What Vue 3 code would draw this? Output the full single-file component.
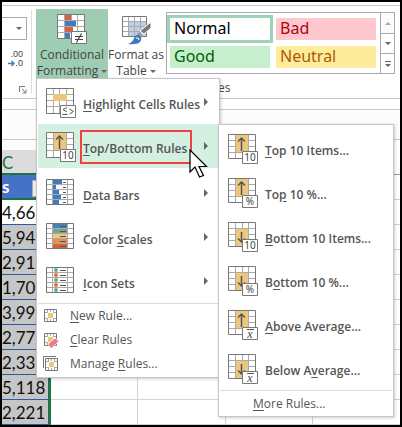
<script setup>
const numbers = ['4,66', '5,94', '2,91', '1,70', '3,99', '2,77', '2,33', '5,118', '2,221']
const gallery = [
  { name: 'Normal', cls: 'normal' },
  { name: 'Bad', cls: 'bad' },
  { name: 'Good', cls: 'good' },
  { name: 'Neutral', cls: 'neutral' }
]
// Each label is split into [before, access key, after].
const rules = [
  { label: ['', 'H', 'ighlight Cells Rules'], icon: 'highlight' },
  { label: ['', 'T', 'op/Bottom Rules'], icon: 'top', active: true },
  { label: ['', 'D', 'ata Bars'], icon: 'bars' },
  { label: ['Color ', 'S', 'cales'], icon: 'scales' },
  { label: ['', 'I', 'con Sets'], icon: 'icons' }
]
const actions = [
  { label: ['', 'N', 'ew Rule...'], icon: 'new' },
  { label: ['', 'C', 'lear Rules'], icon: 'clear' },
  { label: ['Manage ', 'R', 'ules...'], icon: 'manage' }
]
const tops = [
  { label: ['', 'T', 'op 10 Items...'], badge: '10', dir: 'up' },
  { label: ['To', 'p', ' 10 %...'], badge: '%', dir: 'up' },
  { label: ['', 'B', 'ottom 10 Items...'], badge: '10', dir: 'down' },
  { label: ['B', 'o', 'ttom 10 %...'], badge: '%', dir: 'down' },
  { label: ['', 'A', 'bove Average...'], badge: 'x', dir: 'up' },
  { label: ['Below A', 'v', 'erage...'], badge: 'x', dir: 'down' }
]
const scaleColors = ['#4a7ebb', '#6fa795', '#edc77c', '#ec8f45', '#d9603b']
const dotColors = ['#6fa795', '#e8702a', '#6fa795', '#e8702a', '#6fa795']
const barWidths = [9, 3, 6, 8, 6]
</script>

<template>
  <main class="window">
    <header class="ribbon">
      <section class="number-group">
        <button class="format-box" aria-label="Number format"><i class="caret"></i></button>
        <button class="decimals" aria-label="Decrease decimal">
          <span>.00</span>
          <span class="dec-row"><svg width="7" height="7" viewBox="0 0 7 7"><path d="M0 3.5H6M3.5 1L6 3.5L3.5 6" fill="none" stroke="#3f7cbf" stroke-width="1.5" /></svg>.0</span>
        </button>
        <svg class="launcher" width="8" height="8" viewBox="0 0 8 8"><path d="M.5 6V.5H6M3 3L6.500 6.500M7 3.500V7H3.500" fill="none" stroke="#777" /></svg>
      </section>
      <section class="styles-group">
        <button class="big pressed">
          <svg width="30" height="31" viewBox="0 0 30 31">
            <path d="M.5.500H27.500V24.500H.5Z" fill="#fff" />
            <path d="M8 1H14V6H8ZM8 13H16V18H8Z" fill="#d9603b" />
            <path d="M8 7H19V12H8ZM8 19H13V24H8Z" fill="#3f7cbf" />
            <path d="M7.500 1V24M14.500 1V6M20.500 1V24M1 6.500H27M1 12.500H27M1 18.500H27" fill="none" stroke="#aaa" />
            <path d="M.5.500H27.500V24.500H.5Z" fill="none" stroke="#777" />
            <path d="M14.500 17.500H29.500V29.500H14.500Z" fill="#fff" stroke="#777" />
            <path d="M18 22.500H26M18 25.500H26M24.500 19.500L19.500 28.500" fill="none" stroke="#444" stroke-width="1.2" />
          </svg>
          <span>Conditional</span>
          <span class="drop">Formatting <i class="caret"></i></span>
        </button>
        <button class="big format-table">
          <svg width="30" height="31" viewBox="0 0 30 31">
            <path d="M1.500 2.500H25.500V22.500H1.500Z" fill="#fff" />
            <path d="M8 8H25V22H8Z" fill="#bdd0e9" />
            <path d="M7.500 3V22M13.500 3V22M19.500 3V22M2 7.500H25M2 12.500H25M2 17.500H25" fill="none" stroke="#aaa" />
            <path d="M1.500 2.500H25.500V22.500H1.500Z" fill="none" stroke="#777" />
            <path d="M30 8L30 14L23 20L19 17Z" fill="#777" stroke="#fff" />
            <path d="M18 18L22 22L20 24L16 20Z" fill="#999" />
            <path d="M7 30Q12 28 13 24Q15 20 18 21Q22 24 19 28Q16 31 7 30Z" fill="#3f7cbf" />
            <path d="M15 24Q18 23 18 26" fill="none" stroke="#fff" />
          </svg>
          <span>Format as</span>
          <span class="drop">Table <i class="caret"></i></span>
        </button>
        <div class="gallery">
          <div class="swatches">
            <button v-for="g in gallery" :key="g.name" class="swatch" :class="g.cls">{{ g.name }}</button>
          </div>
          <div class="scroller">
            <button class="dim" aria-label="Previous styles"><i class="caret up"></i></button>
            <button aria-label="Next styles"><i class="caret"></i></button>
            <button aria-label="More styles"><i class="more-line"></i><i class="caret"></i></button>
          </div>
        </div>
      </section>
      <span class="group-name">Styles</span>
    </header>
    <div class="formula-bar"></div>
    <div class="sheet-gap"></div>
    <table class="sheet">
      <thead>
        <tr class="letters"><th>C</th><th></th><th></th><th></th><th></th></tr>
      </thead>
      <tbody>
        <tr class="titles"><th><div class="title-cell"><span>s</span><i class="filter"></i></div></th><td></td><td></td><td></td><td></td></tr>
        <tr v-for="n in numbers" :key="n"><td class="num">{{ n }}</td><td></td><td></td><td></td><td></td></tr>
      </tbody>
    </table>

    <nav class="menu main-menu" aria-label="Conditional Formatting">
      <button v-for="r in rules" :key="r.icon" class="item" :class="{ active: r.active }">
        <svg class="pic" width="30" height="31" viewBox="0 0 30 31">
          <path d="M.5.500H27.500V25.500H.5Z" fill="#fff" />
          <g v-if="r.icon === 'highlight'">
            <path d="M7.500 1V25M13.500 1V25M20.500 1V25M1 6.500H27M1 12.500H27M1 18.500H27" fill="none" stroke="#aaa" />
            <path d="M7 6H21V13H7Z" fill="#edc77c" />
          </g>
          <g v-else-if="r.icon === 'top'">
            <path d="M7.500 1V25M20.500 1V25M1 6.500H27M1 12.500H27M1 18.500H27" fill="none" stroke="#aaa" />
            <path d="M8 1H20V18H8Z" fill="#edc77c" />
            <path d="M13.500 17V4M10 7.500L13.500 4L17 7.500" fill="none" stroke="#555" stroke-width="1.500" />
          </g>
          <g v-else>
            <path d="M6.500 1V25M21.500 1V25M1 5.500H27M1 10.500H27M1 15.500H27M1 20.500H27" fill="none" stroke="#aaa" />
            <template v-for="n in 5" :key="n">
              <rect v-if="r.icon === 'bars'" x="7" :y="n * 5 - 4" :width="barWidths[n - 1]" height="4" fill="#3f7cbf" />
              <rect v-if="r.icon === 'scales'" x="7" :y="n * 5 - 4" width="14" height="4" :fill="scaleColors[n - 1]" />
              <rect v-if="r.icon === 'icons'" x="8" :y="n * 5 - 4" width="4" height="4" rx="2" :fill="dotColors[n - 1]" />
              <path :d="`M${r.icon === 'bars' ? 17 : 14} ${n * 5 - 1.5}H20`" stroke="#555" />
            </template>
          </g>
          <path d="M.5.500H27.500V25.500H.5Z" fill="none" stroke="#777" />
          <g v-if="r.icon === 'highlight' || r.icon === 'top'">
            <path d="M14.500 17.500H29.500V29.500H14.500Z" fill="#fff" stroke="#777" />
            <text v-if="r.icon === 'top'" class="badge" x="22" y="27" text-anchor="middle">10</text>
            <path v-else d="M21 19.500L17 21.500L21 24M16.500 26.500H21.500M23.500 21L27.500 23.500L23.500 26" fill="none" stroke="#555" />
          </g>
        </svg>
        <span class="text">{{ r.label[0] }}<u>{{ r.label[1] }}</u>{{ r.label[2] }}</span>
        <i class="arrow"></i>
      </button>
      <hr />
      <button v-for="a in actions" :key="a.icon" class="action">
        <svg width="16" height="16" viewBox="0 0 16 16">
          <path v-if="a.icon === 'manage'" d="M.5 12V.500H13" fill="none" stroke="#777" />
          <g :class="{ shifted: a.icon === 'manage' }">
            <path d="M1.500 1.500H13.500V13.500H1.500Z" fill="#fff" stroke="#777" />
            <path d="M4.500 2V5M10.500 2V5M4.500 10V13M10.500 10V13M2 4.500H5M10 4.500H13M2 10.500H5M10 10.500H13M7.500 2V4M7.500 11V13" stroke="#aaa" />
            <path d="M5 5H10V10H5Z" fill="#edc77c" />
          </g>
          <path v-if="a.icon === 'clear'" d="M5 12L12 6L16 9L9 16H7Z" fill="#e87f90" stroke="#fff" stroke-width=".7" />
        </svg>
        <span>{{ a.label[0] }}<u>{{ a.label[1] }}</u>{{ a.label[2] }}</span>
      </button>
    </nav>

    <nav class="menu sub-menu" aria-label="Top/Bottom Rules">
      <button v-for="t in tops" :key="t.label.join('')" class="item">
        <svg class="pic" width="30" height="31" viewBox="0 0 30 31">
          <path d="M.5.500H27.500V24.500H.5Z" fill="#fff" />
          <path d="M7.500 1V24M14.500 1V24M20.500 1V24M1 6.500H27M1 12.500H27M1 18.500H27" fill="none" stroke="#aaa" />
          <path :d="t.dir === 'up' ? 'M8 1H20V18H8Z' : 'M8 7H20V24H8Z'" fill="#edc77c" />
          <path v-if="t.dir === 'up'" d="M13.500 17V4M10 7.500L13.500 4L17 7.500" fill="none" stroke="#555" stroke-width="1.500" />
          <path v-else d="M13.500 10V20M10 16.500L13.500 20L17 16.500" fill="none" stroke="#555" stroke-width="1.500" />
          <path d="M.5.500H27.500V24.500H.5Z" fill="none" stroke="#777" />
          <path d="M14.500 17.500H29.500V29.500H14.500Z" fill="#fff" stroke="#777" />
          <text v-if="t.badge !== 'x'" class="badge" x="22" y="27" text-anchor="middle">{{ t.badge }}</text>
          <g v-else>
            <text class="badge mean" x="22" y="28" text-anchor="middle">x</text>
            <path d="M19 19.500H26" stroke="#555" />
          </g>
        </svg>
        <span class="text">{{ t.label[0] }}<u>{{ t.label[1] }}</u>{{ t.label[2] }}</span>
      </button>
      <hr />
      <button class="action more"><span><u>M</u>ore Rules...</span></button>
    </nav>

    <div class="callout"></div>
    <svg class="pointer" width="19" height="30" viewBox="0 0 19 30">
      <path d="M1 1V23L6 18L10.500 28L14.500 26.500L10 17.500H17.500Z" fill="#fff" stroke="#000" stroke-width="1.200" />
    </svg>
  </main>
</template>

<style>
body { margin: 0; }
</style>

<style scoped>
* { box-sizing: border-box; }
.window {
  position: relative;
  border: 2px solid #000;
  background: #fff;
  overflow: hidden;
  font-family: "Open Sans", "Noto Sans", sans-serif;
  font-size: 12px;
  line-height: 16px;
  color: #444;
}
button {
  margin: 0;
  padding: 0;
  border: 0;
  background: none;
  font: inherit;
  color: inherit;
}
.caret {
  display: inline-block;
  border: 3px solid transparent;
  border-top-color: #666;
  border-bottom: 0;
  vertical-align: 3px;
}
.caret.up { border-bottom: 3px solid #aaa; border-top: 0; }
.ribbon {
  display: grid;
  grid-template-columns: 30px 1fr;
  margin-top: 3px;
  height: 94px;
  border-top: 1px solid #c8c8c8;
  border-bottom: 1px solid #c8c8c8;
}
.number-group {
  grid-row: 1 / 3;
  display: flex;
  flex-direction: column;
  align-items: flex-end;
  margin: 4px 0 4px;
  padding: 7px 4px 0 0;
  border-right: 1px solid #dcdcdc;
}
.format-box {
  width: 100%;
  height: 23px;
  border: 1px solid #aaa;
  border-left: 0;
  text-align: right;
  padding-right: 4px;
}
.decimals {
  display: flex;
  flex-direction: column;
  align-items: flex-end;
  margin: 10px 4px 0 0;
  font-family: "Liberation Sans", sans-serif;
  font-size: 9px;
  line-height: 9px;
}
.dec-row { display: flex; align-items: center; }
.launcher { margin-top: auto; }
.styles-group {
  display: flex;
  align-items: flex-start;
  height: 72px;
  padding: 3px 5px 0 4px;
}
.big {
  flex: none;
  width: 72px;
  height: 69px;
  padding-top: 5px;
  display: flex;
  flex-direction: column;
  align-items: center;
  justify-content: flex-start;
  white-space: nowrap;
}
.format-table { width: 56px; }
.big svg { flex: none; margin-bottom: 2px; }
.drop { display: flex; align-items: center; gap: 3px; height: 16px; }
.pressed { background: #9fcdb3; }
.gallery {
  display: flex;
  flex: 1;
  height: 62px;
  margin: 3px 0 0 2px;
  border: 1px solid #aaa;
}
.swatches {
  flex: 1;
  display: grid;
  grid-template-columns: 1fr 1fr;
  gap: 6px;
  padding: 5px 4px 5px 3px;
}
.swatch {
  text-align: left;
  padding: 0 0 3px 4px;
  font-family: "Noto Sans", "Open Sans", sans-serif;
  font-size: 16px;
  line-height: 18px;
}
.normal { color: #000; background: #fff; outline: 3px solid #9fd3b7; }
.bad { background: #ffc7ce; color: #b00010; }
.good { background: #c6efce; color: #006100; }
.neutral { background: #ffeb9c; color: #a85c00; }
.scroller {
  width: 14px;
  display: grid;
  grid-template-rows: 1fr 1fr 1fr;
  border-left: 1px solid #aaa;
}
.scroller button {
  display: flex;
  flex-direction: column;
  align-items: center;
  justify-content: center;
  gap: 2px;
}
.scroller button + button { border-top: 1px solid #aaa; }
.dim { background: #fbfbfb; }
.more-line { width: 6px; border-top: 1px solid #666; }
.group-name { padding-left: 166px; line-height: 20px; }
.formula-bar { height: 11px; border-bottom: 1px solid #c8c8c8; }
.sheet-gap { height: 30px; border-bottom: 1px solid #c8c8c8; background: #fcfcfc; }
.sheet {
  width: 100%;
  table-layout: fixed;
  border-collapse: separate;
  border-spacing: 0;
  font-family: Lato, "Open Sans", sans-serif;
  font-size: 17px;
  line-height: 20px;
  color: #111;
}
.sheet td, .sheet th {
  height: 25px;
  padding: 0;
  border-right: 1px solid #d4d4d4;
  border-bottom: 1px solid #d4d4d4;
}
.sheet tr > :first-child { width: 49px; border-right: 3px solid #1f7244; }
.sheet tr > :last-child { border-right: 0; }
.sheet .letters th { height: 35px; border-bottom: 1px solid #999; border-right-width: 1px; }
.sheet .letters th:first-child {
  padding-top: 12px;
  background: linear-gradient(#fcfcfc 10px, #dcdcdc 10px);
  border-bottom: 2px solid #1f7244;
  border-right: 1px solid #ccc;
  color: #1f7244;
  font-weight: 400;
  text-align: left;
}
.sheet .titles th {
  background: #4472c4;
  border-bottom: 2px solid #1f7244;
  color: #fff;
  text-align: left;
}
.title-cell { display: flex; justify-content: space-between; }
.filter { width: 16px; height: 17px; margin-top: 3px; background: #eee; border: 1px solid #aaa; }
.sheet .num { padding-top: 2px; background: #c6c6c6; border-bottom-color: #3156a3; text-align: left; }
.sheet tr:nth-child(2) .num { background: #fff; }
.menu {
  position: absolute;
  display: flex;
  flex-direction: column;
  padding: 1px;
  border: 1px solid #c6c6c6;
  background: #fff;
  box-shadow: 1px 1px 3px rgba(0, 0, 0, .2);
  color: #555;
}
.main-menu { left: 34px; top: 76px; width: 184px; }
.sub-menu { left: 216px; top: 122px; width: 176px; }
.item {
  display: flex;
  align-items: center;
  height: 44px;
  padding: 3px 10px 0 8px;
  text-align: left;
  font-weight: 600;
  white-space: nowrap;
}
.active { background: #d3f0e0; margin-bottom: 3px; }
.pic { flex: none; }
.text { flex: 1; margin-left: 7px; padding-top: 2px; }
u { text-underline-offset: 2px; }
.arrow { margin-bottom: 4px; border: 4px solid transparent; border-left-color: #666; border-right: 0; }
hr { width: 100%; margin: 0; border: 0; border-top: 1px solid #dcdcdc; }
.action {
  display: flex;
  align-items: center;
  gap: 11px;
  height: 24px;
  padding-left: 5px;
  white-space: nowrap;
}
.shifted { transform: translate(1px, 1px); }
.more { padding: 2px 0 0 33px; }
.badge { font: 10px "Noto Sans", sans-serif; fill: #444; }
.mean { font: italic 12px "Liberation Serif", serif; }
.callout {
  position: absolute;
  left: 78px;
  top: 128px;
  width: 112px;
  height: 34px;
  border: 2px solid #f04040;
}
.pointer { position: absolute; left: 187px; top: 147px; }
</style>
